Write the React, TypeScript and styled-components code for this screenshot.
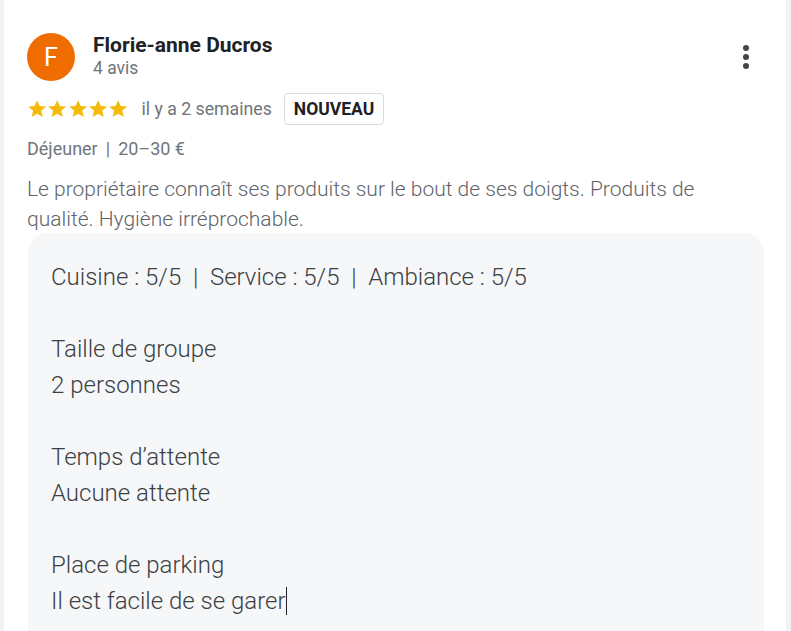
import React from "react";
import styled, { createGlobalStyle } from "styled-components";

const Global = createGlobalStyle`
  html, body { margin: 0; padding: 0; background: #ffffff; }
  body { font-family: Roboto, "Noto Sans", Arial, sans-serif; }
`;

const Page = styled.div`
  width: 791px;
  height: 631px;
  box-sizing: border-box;
  border-left: 4px solid #f1f2f4;
  border-right: 5px solid #f1f2f4;
  background: #fff;
  overflow: hidden;
`;

const Card = styled.div`
  padding: 33px 23px 0 23px;
  display: flex;
  flex-direction: column;
`;

const Header = styled.div`
  display: flex;
  align-items: flex-start;
  gap: 18px;
`;

const Avatar = styled.div`
  width: 48px;
  height: 48px;
  border-radius: 50%;
  background: #ef6c00;
  color: #fff;
  display: flex;
  align-items: center;
  justify-content: center;
  font-size: 25px;
  font-weight: 400;
  flex: none;
`;

const Who = styled.div`
  display: flex;
  flex-direction: column;
  flex: 1;
`;

const Name = styled.div`
  font-size: 21px;
  font-weight: 700;
  color: #202124;
  line-height: 24px;
`;

const Count = styled.div`
  font-size: 17.5px;
  color: #70757a;
  line-height: 22px;
`;

const MoreButton = styled.button`
  border: none;
  background: transparent;
  padding: 0;
  margin: 9px 5px 0 0;
  width: 24px;
  height: 30px;
  display: flex;
  align-items: center;
  justify-content: center;
  color: #444;
`;

const MetaRow = styled.div`
  display: flex;
  align-items: center;
  margin-top: 12px;
  height: 32px;
`;

const Stars = styled.div`
  display: flex;
  margin-right: 13px;
`;

const When = styled.span`
  font-size: 17.7px;
  color: #70757a;
  margin-right: 12px;
`;

const Badge = styled.span`
  border: 1px solid #dadce0;
  border-radius: 4px;
  padding: 0 9px;
  height: 30px;
  display: inline-flex;
  align-items: center;
  font-size: 17.5px;
  font-weight: 700;
  color: #202124;
`;

const Details = styled.div`
  margin-top: 12px;
  font-size: 18px;
  color: #70757a;
  line-height: 24px;
`;

const Sep = styled.span`
  margin: 0 8px;
`;

const Text = styled.p`
  margin: 13px 0 0 0;
  font-size: 21px;
  line-height: 30px;
  color: #5f6368;
  font-weight: 300;
  width: 700px;
`;

const Box = styled.div`
  margin-top: -1px;
  margin-left: 1px;
  width: 736px;
  background: #f6f7f9;
  border-radius: 20px;
  padding: 26px 23px 40px 23px;
  box-sizing: border-box;
  font-size: 24px;
  line-height: 36px;
  font-weight: 300;
  color: #3c4043;
`;

const Line = styled.div`
  min-height: 36px;
  white-space: pre;
`;

const Caret = styled.span`
  display: inline-block;
  width: 1px;
  height: 28px;
  background: #202124;
  vertical-align: -6px;
`;

const Star = () => (
  <svg width="20.3" height="20" viewBox="0 0 24 24">
    <path
      fill="#f5bb0b"
      d="M12 1.4l3.1 7 7.6.7-5.8 5 1.8 7.5L12 17.6l-6.7 4 1.8-7.5-5.8-5 7.6-.7z"
    />
  </svg>
);

const Dots = () => (
  <svg width="8" height="26" viewBox="0 0 8 26">
    <circle cx="4" cy="4" r="3" fill="#444746" />
    <circle cx="4" cy="13" r="3" fill="#444746" />
    <circle cx="4" cy="22" r="3" fill="#444746" />
  </svg>
);

export default function App() {
  return (
    <Page>
      <Global />
      <Card>
        <Header>
          <Avatar>F</Avatar>
          <Who>
            <Name>Florie-anne Ducros</Name>
            <Count>4 avis</Count>
          </Who>
          <MoreButton aria-label="Plus">
            <Dots />
          </MoreButton>
        </Header>
        <MetaRow>
          <Stars>
            {[0, 1, 2, 3, 4].map((i) => (
              <Star key={i} />
            ))}
          </Stars>
          <When>il y a 2 semaines</When>
          <Badge>NOUVEAU</Badge>
        </MetaRow>
        <Details>
          Déjeuner<Sep>|</Sep>20–30 €
        </Details>
        <Text>
          Le propriétaire connaît ses produits sur le bout de ses doigts. Produits de qualité. Hygiène irréprochable.
        </Text>
        <Box>
          <Line>Cuisine : 5/5  |  Service : 5/5  |  Ambiance : 5/5</Line>
          <Line> </Line>
          <Line>Taille de groupe</Line>
          <Line>2 personnes</Line>
          <Line> </Line>
          <Line>Temps d’attente</Line>
          <Line>Aucune attente</Line>
          <Line> </Line>
          <Line>Place de parking</Line>
          <Line>
            Il est facile de se garer<Caret />
          </Line>
        </Box>
      </Card>
    </Page>
  );
}
